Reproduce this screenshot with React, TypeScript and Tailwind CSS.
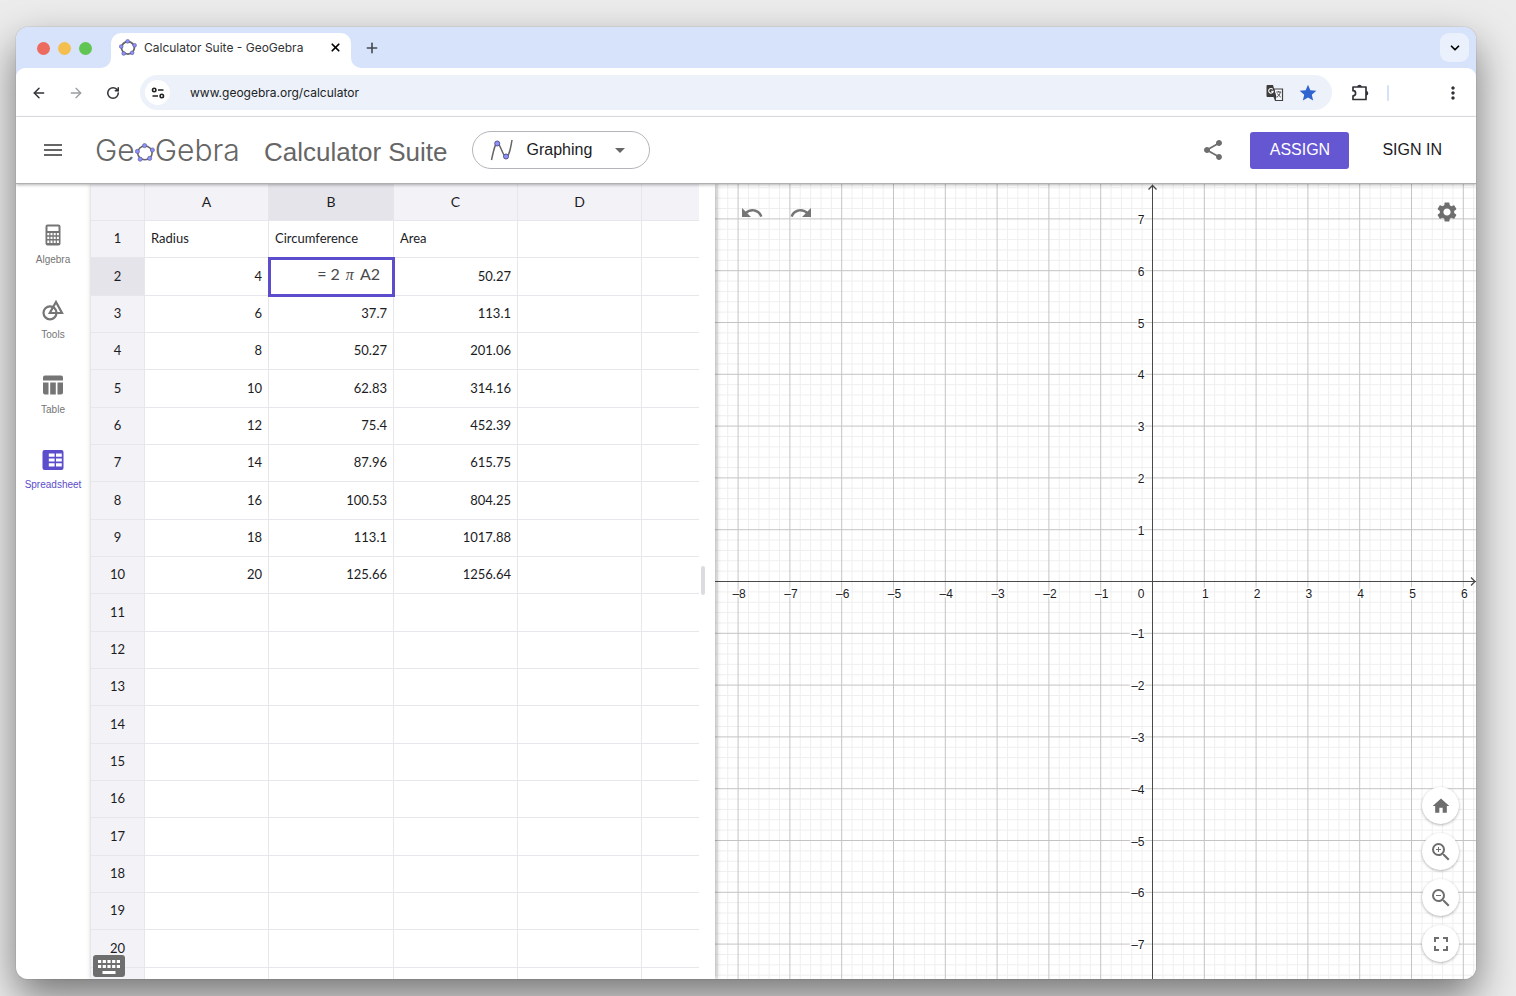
import type { ReactNode } from "react";
import { clsx } from "clsx";
import { ArrowLeft, ArrowRight, ChevronDown, Plus, RotateCw, X } from "lucide-react";
import {
  MdArrowDropDown,
  MdFullscreen,
  MdHome,
  MdMenu,
  MdMoreVert,
  MdSettings,
  MdShare,
  MdStar,
  MdZoomIn,
  MdZoomOut,
} from "react-icons/md";

const HELVETICA = "font-['Liberation_Sans',Arial,sans-serif]";

const COLUMNS = ["A", "B", "C", "D", ""];

const CELLS: Record<number, string[]> = {
  1: ["Radius", "Circumference", "Area"],
  2: ["4", "", "50.27"],
  3: ["6", "37.7", "113.1"],
  4: ["8", "50.27", "201.06"],
  5: ["10", "62.83", "314.16"],
  6: ["12", "75.4", "452.39"],
  7: ["14", "87.96", "615.75"],
  8: ["16", "100.53", "804.25"],
  9: ["18", "113.1", "1017.88"],
  10: ["20", "125.66", "1256.64"],
};

const ROWS = Array.from({ length: 21 }, (_, i) => i + 1);

function Pentagon({ className, ring = 1.6 }: { className?: string; ring?: number }) {
  const dots = [
    [9.6, 2.6],
    [17.4, 7],
    [14.6, 15.4],
    [5.2, 16.2],
    [2.4, 8.4],
  ];
  return (
    <svg viewBox="0 0 20 19" className={className} aria-hidden="true">
      <ellipse
        cx="9.900"
        cy="9.900"
        rx="7.200"
        ry="6.900"
        fill="none"
        stroke="#666"
        strokeWidth={ring}
      />
      {dots.map(([x, y]) => (
        <circle key={x} cx={x} cy={y} r="2.1" fill="#8f8fff" stroke="#55558c" strokeWidth="0.6" />
      ))}
    </svg>
  );
}

function TabStrip() {
  return (
    <div className="flex h-[41px] items-end bg-[#d7e3fb]">
      <div className="flex items-center gap-2 self-center pt-px pl-[21px]">
        <button aria-label="Close window" className="size-[13px] rounded-full bg-[#ed6a5e]" />
        <button aria-label="Minimize window" className="size-[13px] rounded-full bg-[#f4bf4f]" />
        <button aria-label="Zoom window" className="size-[13px] rounded-full bg-[#61c554]" />
      </div>
      <div className="ml-[9px] size-[10px] bg-white">
        <div className="size-full rounded-br-[10px] bg-[#d7e3fb]" />
      </div>
      <div className="flex h-[35px] w-[240px] items-center rounded-t-[10px] bg-white pr-2 pb-1.5 pl-2">
        <Pentagon className="h-[17px] w-[18px]" ring={2} />
        <span className="ml-[7px] flex-1 text-xs whitespace-nowrap text-[#303236]">
          Calculator Suite - GeoGebra
        </span>
        <button aria-label="Close tab" className="flex size-4 items-center justify-center">
          <X className="size-[13px]" strokeWidth={3.2} />
        </button>
      </div>
      <div className="size-[10px] bg-white">
        <div className="size-full rounded-bl-[10px] bg-[#d7e3fb]" />
      </div>
      <button aria-label="New tab" className="ml-[3px] flex size-4 items-center justify-center self-center">
        <Plus className="size-4 text-[#45484d]" strokeWidth={2.4} />
      </button>
      <button
        aria-label="Search tabs"
        className="mr-[7px] ml-auto flex size-[29px] items-center justify-center self-center rounded-[9px] bg-[#eaf1fd]"
      >
        <ChevronDown className="size-[14px]" strokeWidth={3} />
      </button>
    </div>
  );
}

function TranslateIcon() {
  return (
    <svg viewBox="0 0 18 18" className="size-[18px]" aria-hidden="true">
      <path d="M8 5h8.5v11.5H9.5z" fill="#f4f7fc" stroke="#444" strokeWidth="1.2" />
      <path d="M1.500 1h5.500l3.500 12h-9a1 1 0 0 1-1-1v-10a1 1 0 0 1 1-1z" fill="#3c3c3c" />
      <path d="M6.800 5.300a2.300 2.300 0 1 0 .500 1.900h-2.200" fill="none" stroke="#fff" strokeWidth="1.100" />
      <path
        d="M10.200 8h5M12.700 7v1M14.300 8c-.400 2.500-1.600 4-3.400 5.200M11.400 9.500c.800 1.600 2 2.700 3.400 3.600"
        fill="none"
        stroke="#444"
        strokeWidth="0.900"
      />
      <path d="M7.500 13h3l-1.500 3.500z" fill="#3c3c3c" />
    </svg>
  );
}

function ExtensionIcon() {
  return (
    <svg viewBox="0 0 20 20" className="size-5" aria-hidden="true">
      <path
        d="M3 4h13v12.500H3v-3.600c1.600 0 2.600-1.100 2.600-2.600S4.600 7.700 3 7.700z"
        fill="none"
        stroke="#303236"
        strokeWidth="1.700"
        strokeLinejoin="round"
      />
      <path d="M7.200 4a2.300 2.300 0 0 1 4.600 0zM16 8a2.300 2.300 0 0 1 0 4.600z" fill="#303236" />
    </svg>
  );
}

function AddressBar() {
  return (
    <div className="bg-[#d7e3fb]">
      <div className="flex h-[49px] items-center rounded-t-[9px] border-b border-[#e4e5e8] bg-white px-[15px] pt-px">
        <button aria-label="Back">
          <ArrowLeft className="size-4 text-[#303236]" strokeWidth={2.2} />
        </button>
        <button aria-label="Forward" className="ml-[21px]">
          <ArrowRight className="size-4 text-[#9a9da1]" strokeWidth={2} />
        </button>
        <button aria-label="Reload" className="ml-[22px]">
          <RotateCw className="size-[14px] text-[#303236]" strokeWidth={2.6} />
        </button>
        <div className="ml-5 flex h-[35px] flex-1 items-center rounded-full bg-[#edf1f9] pr-[14px] pl-[5px]">
          <button
            aria-label="Site information"
            className="flex size-[25px] items-center justify-center rounded-full bg-white"
          >
            <svg viewBox="0 0 14 14" className="size-[14px]" fill="none" stroke="#202124" strokeWidth="1.600">
              <circle cx="3.200" cy="4" r="1.700" />
              <path d="M7 4h5.500M1.500 10h5.500" />
              <circle cx="10.800" cy="10" r="1.700" />
            </svg>
          </button>
          <input
            aria-label="Address"
            defaultValue="www.geogebra.org/calculator"
            className="ml-5 min-w-0 flex-1 bg-transparent text-xs text-[#202124] outline-none"
          />
          <button aria-label="Translate">
            <TranslateIcon />
          </button>
          <button aria-label="Bookmark" className="ml-[14px]">
            <MdStar className="size-[20px] text-[#2f63d0]" />
          </button>
        </div>
        <button aria-label="Extensions" className="ml-[18px]">
          <ExtensionIcon />
        </button>
        <div className="ml-[17px] h-4 w-0.5 rounded bg-[#d3e1fb]" />
        <button aria-label="Browser menu" className="-mr-0.5 ml-[54px]">
          <MdMoreVert className="size-5 text-[#303236]" />
        </button>
      </div>
    </div>
  );
}

function Header() {
  return (
    <header
      className={clsx(
        "relative z-20 flex h-[67px] items-center border-b border-[#b0b0b0] bg-white pr-[34px] pl-[25px] shadow-[0_1px_3px_rgba(0,0,0,0.3)]",
        HELVETICA,
      )}
    >
      <button aria-label="Menu">
        <MdMenu className="size-6 text-[#666]" />
      </button>
      <div className="ml-[30px] flex w-[146px] items-center font-[Inter,sans-serif] text-[30px] font-light text-[#666]">
        Ge
        <Pentagon className="mt-1 h-[19px] w-5" />
        Gebra
      </div>
      <h1 className="ml-[23px] pt-1 text-[26px] whitespace-nowrap text-[#666]">Calculator Suite</h1>
      <button className="ml-6 flex h-[38px] w-[178px] items-center rounded-full border border-[#b4b4bc] pr-[17px] pl-[17px]">
        <svg viewBox="0 0 24 24" className="size-6" fill="none" stroke="#666" strokeWidth="1.500">
          <path d="M1.500 22C3.500 13 5 5 7.500 5s5.500 14 8.500 14 4.500-8 6-17" />
          <circle cx="7.200" cy="5.500" r="2.500" fill="#8f8fff" stroke="#55558c" strokeWidth="1" />
          <circle cx="16" cy="18.500" r="2.500" fill="#8f8fff" stroke="#55558c" strokeWidth="1" />
        </svg>
        <span className="ml-[13px] flex-1 text-left text-base text-[#1c1c1f]">Graphing</span>
        <MdArrowDropDown className="size-6 text-[#666]" />
      </button>
      <button aria-label="Share" className="ml-auto">
        <MdShare className="size-6 text-[#6e6e6e]" />
      </button>
      <button className="ml-[25px] h-[37px] w-[99px] rounded-[3px] bg-[#6557d2] text-base text-white">
        ASSIGN
      </button>
      <button className="ml-[33px] text-base text-[#1c1c1f]">SIGN IN</button>
    </header>
  );
}

interface NavItemProps {
  label: string;
  active?: boolean;
  children: ReactNode;
}

function NavItem({ label, active, children }: NavItemProps) {
  return (
    <button
      className={clsx(
        "flex h-[75px] w-full flex-col items-center gap-[5px]",
        active ? "text-[#5b4dcb]" : "text-[#757575]",
      )}
    >
      <svg viewBox="0 0 24 24" className="size-6" aria-hidden="true">
        {children}
      </svg>
      <span className="text-[10px]">{label}</span>
    </button>
  );
}

function SideNav() {
  return (
    <nav className={clsx("z-10 flex w-[75px] flex-col bg-white pt-[39px] pr-px shadow-[0_0_3px_rgba(0,0,0,0.25)]", HELVETICA)}>
      <NavItem label="Algebra">
        <path
          fill="currentColor"
          fillRule="evenodd"
          d="M6.500 1.500h11a2 2 0 0 1 2 2v17a2 2 0 0 1-2 2h-11a2 2 0 0 1-2-2v-17a2 2 0 0 1 2-2zM6.500 3.500v4.500h11V3.500zM6.300 10v2.200h2V10zM9.500 10v2.200h2V10zM12.700 10v2.200h2V10zM15.900 10v2.200h2V10zM6.300 13.700v2.200h2v-2.200zM9.500 13.700v2.200h2v-2.200zM12.700 13.700v2.200h2v-2.200zM15.900 13.700v2.200h2v-2.200zM6.300 17.400v2.600h2v-2.600zM9.500 17.400v2.600h2v-2.600zM12.700 17.400v2.600h2v-2.600zM15.900 17.400v2.600h2v-2.600z"
        />
      </NavItem>
      <NavItem label="Tools">
        <g fill="none" stroke="currentColor" strokeWidth="2.200">
          <circle cx="9" cy="14.800" r="6.500" />
          <path d="M15 4l6 11H8.800z" />
        </g>
      </NavItem>
      <NavItem label="Table">
        <path
          fill="currentColor"
          d="M4 2.500h16a2 2 0 0 1 2 2V7.500H2V4.500a2 2 0 0 1 2-2zM2 9.500h5.500v12H4a2 2 0 0 1-2-2zM9.200 9.500h5.600v12H9.200zM16.500 9.500H22v10a2 2 0 0 1-2 2h-3.500z"
        />
      </NavItem>
      <NavItem label="Spreadsheet" active>
        <path
          fill="currentColor"
          fillRule="evenodd"
          d="M3.500 2h17a2 2 0 0 1 2 2v16a2 2 0 0 1-2 2h-17a2 2 0 0 1-2-2V4a2 2 0 0 1 2-2zM7.800 5.500v3.200h5.800v-3.200zM15 5.500v3.200h5.800v-3.200zM7.800 10.400v3.200h5.800v-3.200zM15 10.400v3.200h5.800v-3.200zM7.800 15.300v3.200h5.800v-3.200zM15 15.300v3.200h5.800v-3.200z"
        />
      </NavItem>
    </nav>
  );
}

function Formula() {
  return (
    <div className="flex items-baseline justify-end gap-1.5 pr-[7px] pb-1 text-base leading-6 text-[#4a4a4a]">
      <span>= 2</span>
      <span className="font-['Liberation_Serif',serif] italic">π</span>
      <span>A2</span>
    </div>
  );
}

function Spreadsheet() {
  return (
    <div className="relative z-10 w-[624px] overflow-hidden bg-white pr-4 shadow-[1px_0_5px_rgba(0,0,0,0.35)]">
      <table className="w-full table-fixed border-separate border-spacing-0 font-[Lato,sans-serif] text-[13px] text-[#1c1c1f]">
        <colgroup>
          <col className="w-[54px]" />
          <col className="w-[124px]" />
          <col className="w-[125px]" />
          <col className="w-[124px]" />
          <col className="w-[124px]" />
          <col />
        </colgroup>
        <thead>
          <tr className="h-[37px]">
            <th className="border-r border-b border-[#e6e6eb] bg-[#f3f2f7]" />
            {COLUMNS.map((name) => (
              <th
                key={name}
                className={clsx(
                  "border-b border-[#e6e6eb] p-0 text-sm font-normal",
                  name && "border-r",
                  name === "B" ? "bg-[#e5e4ea]" : "bg-[#f3f2f7]",
                )}
              >
                {name}
              </th>
            ))}
          </tr>
        </thead>
        <tbody>
          {ROWS.map((row) => (
            <tr key={row} className={row % 3 === 2 ? "h-[38px]" : "h-[37px]"}>
              <th
                className={clsx(
                  "border-r border-b border-[#e6e6eb] p-0 font-normal",
                  row === 2 ? "bg-[#e5e4ea]" : "bg-[#f3f2f7]",
                )}
              >
                {row <= 20 && row}
              </th>
              {COLUMNS.map((name, col) => {
                const editing = row === 2 && col === 1;
                return (
                  <td
                    key={name}
                    className={clsx(
                      "border-b border-[#e6e6eb] px-1.5 py-0",
                      name && "border-r",
                      row === 1 ? "text-left" : "text-right",
                      editing && "outline-3 -outline-offset-2 outline-[#5b4dcb]",
                    )}
                  >
                    {editing ? <Formula /> : CELLS[row]?.[col]}
                  </td>
                );
              })}
            </tr>
          ))}
        </tbody>
      </table>
      <div className="absolute top-[382px] right-2.5 h-[29px] w-1 rounded-full bg-[#dcdce0]" />
      <button aria-label="Show keyboard" className="absolute bottom-0.5 left-0.5">
        <svg viewBox="0 0 32 22" className="h-[22px] w-8">
          <rect width="32" height="22" rx="3" fill="#6e6e6e" />
          <path d="M5 6.500h23M5 11.500h23" stroke="#fff" strokeWidth="3.200" strokeDasharray="3.200 1.500" />
          <path d="M9.500 17.500h13" stroke="#fff" strokeWidth="3" />
        </svg>
      </button>
    </div>
  );
}

// Pixels per unit, and where the origin lies in the drawing area
const UNIT = 51.8;
const ORIGIN_X = 437.5;
const ORIGIN_Y = 397.5;

const STEPS = Array.from({ length: 351 }, (_, i) => i - 100);
const X_LABELS = [-8, -7, -6, -5, -4, -3, -2, -1, 1, 2, 3, 4, 5, 6];
const Y_LABELS = [7, 6, 5, 4, 3, 2, 1, -1, -2, -3, -4, -5, -6, -7];

const format = (n: number) => String(n).replace("-", "–");

function GraphingView() {
  return (
    <div className={clsx("relative flex-1 overflow-hidden bg-white", HELVETICA)}>
      <svg className="absolute inset-0 size-full" role="img" aria-label="Coordinate plane">
        {[false, true].map((major) => (
          <g key={String(major)} stroke={major ? "#c4c4c4" : "#efefef"}>
            {STEPS.filter((n) => (n % 5 === 0) === major).map((n) => {
              const x = ORIGIN_X + (n * UNIT) / 5;
              const y = ORIGIN_Y + (n * UNIT) / 5;
              return (
                <g key={n}>
                  {x > 0 && <line x1={x} x2={x} y1="0" y2="100%" />}
                  {y > 0 && <line x1="0" x2="100%" y1={y} y2={y} />}
                </g>
              );
            })}
          </g>
        ))}
        <g stroke="#4a4a4a" fill="none">
          <line x1={ORIGIN_X} x2={ORIGIN_X} y1="1" y2="100%" />
          <path d={`M${ORIGIN_X - 4} 5.500l4-4 4 4`} strokeWidth="1.300" />
          <line x1="0" x2="100%" y1={ORIGIN_Y} y2={ORIGIN_Y} />
          <svg x="100%" y={ORIGIN_Y} overflow="visible">
            <path d="M-5-4l4 4-4 4" strokeWidth="1.300" />
          </svg>
        </g>
        <g fontSize="12" fill="#1c1c1f" stroke="#fff" strokeWidth="3" paintOrder="stroke">
          {X_LABELS.map((n) => (
            <text key={n} x={ORIGIN_X + n * UNIT + 1} y={ORIGIN_Y + 16} textAnchor="middle">
              {format(n)}
            </text>
          ))}
          {Y_LABELS.map((n) => (
            <text key={n} x={ORIGIN_X - 8} y={ORIGIN_Y - n * UNIT + 5} textAnchor="end">
              {format(n)}
            </text>
          ))}
          <text x={ORIGIN_X - 8} y={ORIGIN_Y + 16} textAnchor="end">
            0
          </text>
        </g>
      </svg>
      <div className="absolute top-[17px] left-[25px] flex gap-[25px] text-[#757575]">
        <button aria-label="Undo" className="h-4 overflow-hidden">
          <UndoIcon />
        </button>
        <button aria-label="Redo" className="h-4 -scale-x-100 overflow-hidden">
          <UndoIcon />
        </button>
      </div>
      <button aria-label="Settings" className="absolute top-4 right-[17px] text-[#6e6e6e]">
        <MdSettings className="size-6" />
      </button>
      <div className="absolute right-[17px] bottom-[17px] flex flex-col gap-[9px]">
        <RoundButton label="Standard view">
          <MdHome className="size-5" />
        </RoundButton>
        <RoundButton label="Zoom in">
          <MdZoomIn className="size-6" />
        </RoundButton>
        <RoundButton label="Zoom out">
          <MdZoomOut className="size-6" />
        </RoundButton>
        <RoundButton label="Fullscreen">
          <MdFullscreen className="size-6" />
        </RoundButton>
      </div>
    </div>
  );
}

function UndoIcon() {
  return (
    <svg viewBox="0 0 24 24" className="size-6" aria-hidden="true">
      <path
        fill="currentColor"
        d="M12.500 8c-2.700 0-5 1-6.900 2.600L2 7v9h9l-3.600-3.600c1.400-1.200 3.100-1.900 5.100-1.900 3.500 0 6.500 2.300 7.600 5.500l2.400-.800C21.100 11 17.200 8 12.500 8z"
      />
    </svg>
  );
}

function RoundButton({ label, children }: { label: string; children: ReactNode }) {
  return (
    <button
      aria-label={label}
      className="flex size-[37px] items-center justify-center rounded-full bg-white text-[#6e6e6e] shadow-[0_1px_3px_rgba(0,0,0,0.3)]"
    >
      {children}
    </button>
  );
}

export default function App() {
  return (
    <div className="flex h-screen overflow-hidden bg-[#ececec] pt-[27px] pr-10 pb-[17px] pl-4 font-[Inter,sans-serif]">
      <div className="flex min-w-0 flex-1 flex-col overflow-hidden rounded-xl bg-white shadow-[0_0_1px_rgba(0,0,0,0.5),0_18px_40px_rgba(0,0,0,0.5)]">
        <TabStrip />
        <AddressBar />
        <Header />
        <main className="flex min-h-0 flex-1">
          <SideNav />
          <Spreadsheet />
          <GraphingView />
        </main>
      </div>
    </div>
  );
}
